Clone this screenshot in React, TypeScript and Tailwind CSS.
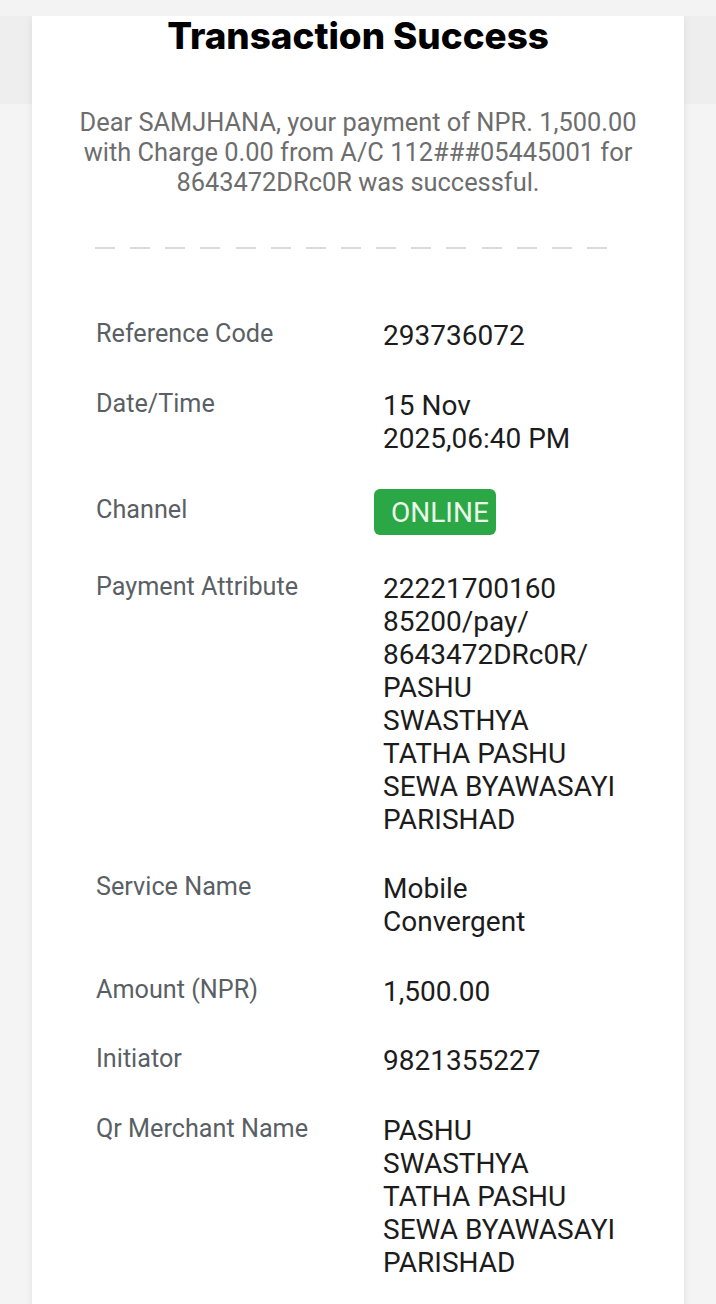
import React from "react";

type Row = {
  label: string;
  lines?: string[];
  badge?: string;
};

const rows: Row[] = [
  { label: "Reference Code", lines: ["293736072"] },
  { label: "Date/Time", lines: ["15 Nov", "2025,06:40 PM"] },
  { label: "Channel", badge: "ONLINE" },
  {
    label: "Payment Attribute",
    lines: [
      "22221700160",
      "85200/pay/",
      "8643472DRc0R/",
      "PASHU",
      "SWASTHYA",
      "TATHA PASHU",
      "SEWA BYAWASAYI",
      "PARISHAD",
    ],
  },
  { label: "Service Name", lines: ["Mobile", "Convergent"] },
  { label: "Amount (NPR)", lines: ["1,500.00"] },
  { label: "Initiator", lines: ["9821355227"] },
  {
    label: "Qr Merchant Name",
    lines: ["PASHU", "SWASTHYA", "TATHA PASHU", "SEWA BYAWASAYI", "PARISHAD"],
  },
];

function DashedRule() {
  return (
    <div className="flex justify-between w-[512px] ml-[63px]">
      {Array.from({ length: 15 }).map((_, i) => (
        <span key={i} className="block w-[20px] h-[2px] bg-[#dadada]" />
      ))}
    </div>
  );
}

export default function App() {
  return (
    <div
      className="relative min-h-screen bg-[#f4f4f4] overflow-hidden"
      style={{ fontFamily: "Roboto, 'Noto Sans', sans-serif" }}
    >
      <div className="absolute top-0 left-0 right-0 h-[16px] bg-[#f3f3f3] z-10" />
      <div className="h-[88px] mt-[16px] bg-[#eeeeee]" />
      <div className="-mt-[88px] mx-[32px] bg-white shadow-[0_0_8px_rgba(0,0,0,0.08)] pb-[60px]">
        <h1
          className="-mt-[4px] text-center text-[36.8px] leading-[40px] font-extrabold text-black"
          style={{ fontFamily: "Inter, 'Noto Sans', sans-serif" }}
        >
          Transaction Success
        </h1>

        <p className="mt-[51px] text-center text-[25.4px] leading-[30px] text-[#6d6d6d]">
          <span className="block">Dear SAMJHANA, your payment of NPR. 1,500.00</span>
          <span className="block">with Charge 0.00 from A/C 112###05445001 for</span>
          <span className="block">8643472DRc0R was successful.</span>
        </p>

        <div className="mt-[50px]">
          <DashedRule />
        </div>

        <div className="mt-[70px] pl-[64px] flex flex-col gap-y-[36.5px]">
          {rows.map((row) => (
            <div key={row.label} className="grid grid-cols-[287px_1fr]">
              <div
                className={`text-[25.2px] leading-[30px] text-[#5a5f65] whitespace-nowrap ${
                  row.badge ? "pt-[4px]" : ""
                }`}
              >
                {row.label}
              </div>
              <div className="text-[28px] leading-[33px] text-[#1c1c1c] whitespace-nowrap">
                {row.badge ? (
                  <span className="-ml-[9px] -mt-[2px] inline-flex items-center w-[122px] h-[46px] pl-[17px] rounded-[6px] bg-[#2ba845] text-[#eaf9ea] text-[28px]">
                    {row.badge}
                  </span>
                ) : (
                  row.lines!.map((l, i) => (
                    <span key={i} className="block">
                      {l}
                    </span>
                  ))
                )}
              </div>
            </div>
          ))}
        </div>
      </div>
    </div>
  );
}
